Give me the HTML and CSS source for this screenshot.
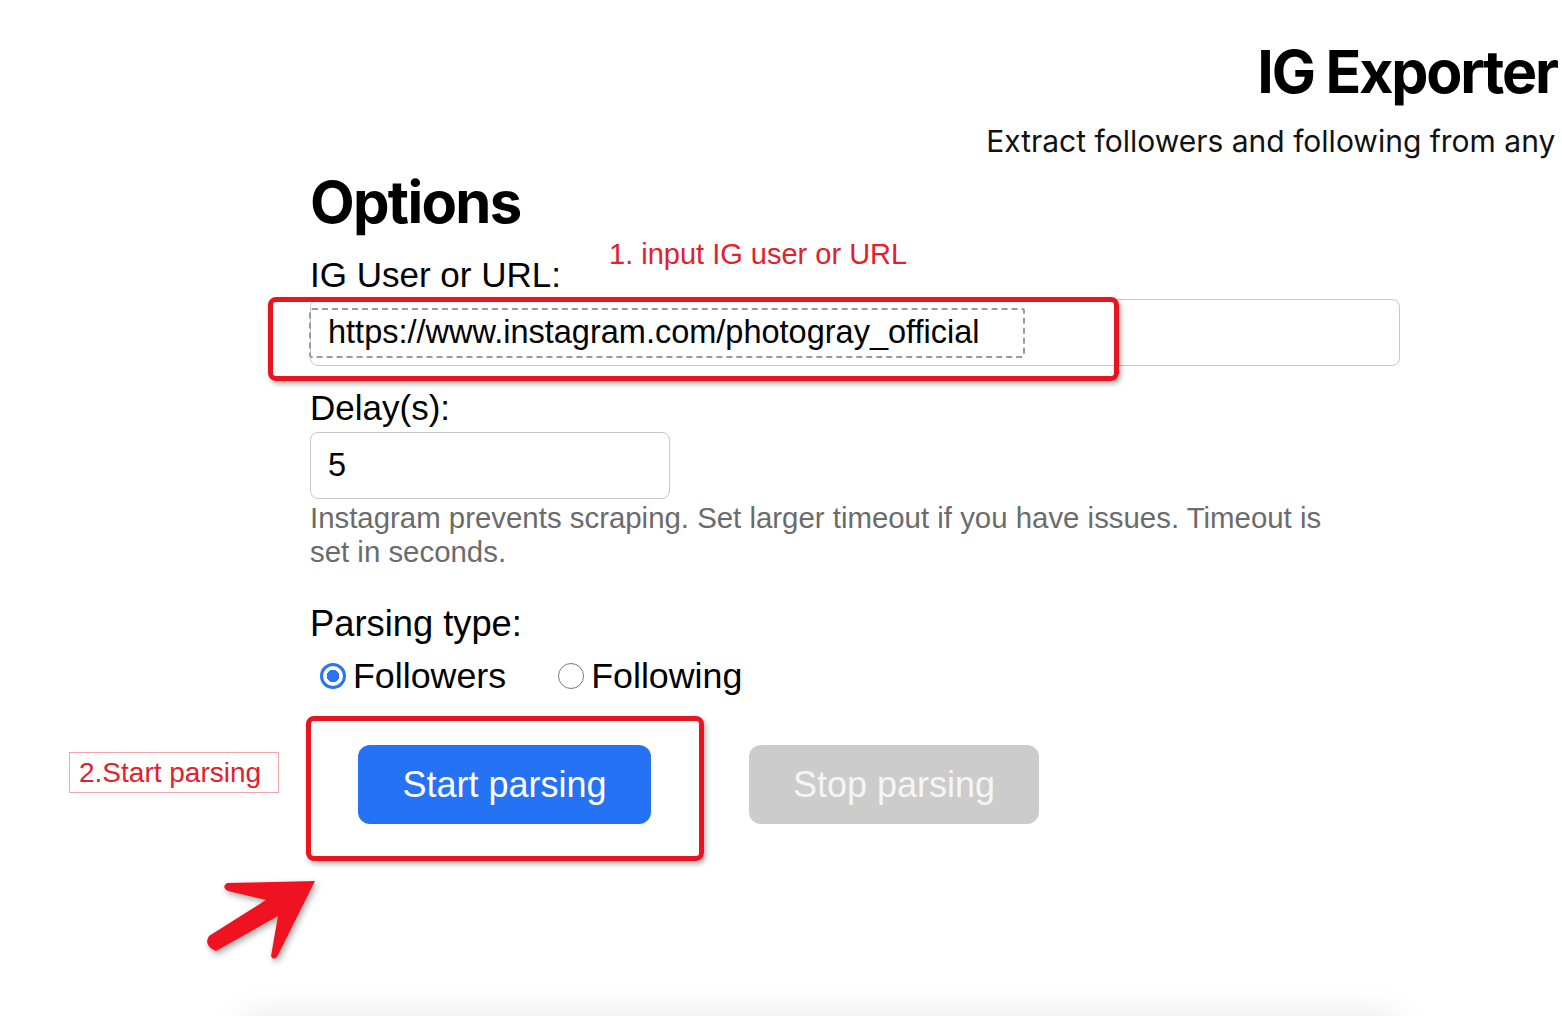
FILE: index.html
```html
<!DOCTYPE html>
<html lang="en">
<head>
<meta charset="utf-8">
<title>IG Exporter</title>
<link rel="stylesheet" href="styles.css">
</head>
<body>
<div class="page">
  <header class="header">
    <h1 class="title">IG Exporter</h1>
    <p class="subtitle">Extract followers and following from any Instagram account</p>
  </header>

  <form class="form">
    <h2 class="options-title">Options</h2>

    <label class="field-label" for="user">IG User or URL:</label>
    <input class="text-input" id="user" type="text" value="https://www.instagram.com/photogray_official">

    <label class="field-label field-gap" for="delay">Delay(s):</label>
    <input class="text-input delay-input" id="delay" type="text" value="5">
    <p class="hint">Instagram prevents scraping. Set larger timeout if you have issues. Timeout is set in seconds.</p>

    <div class="field-label parsing-label">Parsing type:</div>
    <div class="radio-row">
      <label class="radio-option"><input class="radio" type="radio" name="type" checked><span>Followers</span></label>
      <label class="radio-option"><input class="radio" type="radio" name="type"><span>Following</span></label>
    </div>

    <div class="button-row">
      <button class="btn btn-start" type="button">Start parsing</button>
      <button class="btn btn-stop" type="button" disabled>Stop parsing</button>
    </div>

    <div class="card-shadow"></div>
  </form>

  <!-- annotations -->
  <div class="note note-input">1. input IG user or URL</div>
  <div class="mark mark-input"></div>
  <div class="dashed-focus"></div>
  <div class="note-box">2.Start parsing</div>
  <div class="mark mark-button"></div>
  <svg class="arrow" width="130" height="100" viewBox="0 0 130 100">
    <path d="M115 11 L27 13 Q21 17 28 21 L66 30 L9 66 Q3 76 16 81 L78 46 L71 86 Q73 91 77 87 Z" fill="#ef1220"/>
  </svg>
</div>
</body>
</html>
```

FILE: styles.css
```css
html, body {
  margin: 0;
  padding: 0;
  background: #ffffff;
}

body {
  font-family: "Liberation Sans", Arial, sans-serif;
  color: #000;
  overflow: hidden;
}

.page {
  position: relative;
  width: 1562px;
  height: 1016px;
  overflow: hidden;
}

.header {
  width: 1000px;
  margin-left: 907px;
  padding-top: 36px;
  text-align: center;
}

.title {
  margin: 0;
  font-family: Inter, "Liberation Sans", sans-serif;
  font-weight: 700;
  font-size: 59px;
  line-height: 72px;
  letter-spacing: -2.2px;
}

.subtitle {
  margin: 15px 0 0;
  font-family: Inter, "Liberation Sans", sans-serif;
  font-size: 30px;
  line-height: 36px;
  color: #111;
}

.form {
  margin-left: 310px;
  width: 1090px;
}

.options-title {
  margin: 10px 0 0;
  font-family: Inter, "Liberation Sans", sans-serif;
  font-weight: 700;
  font-size: 58px;
  line-height: 67px;
  letter-spacing: -1.7px;
}

.field-label {
  display: block;
  margin-top: 19px;
  font-size: 35px;
  line-height: 40px;
  color: #000;
}

.field-gap {
  margin-top: 22px;
}

.text-input {
  display: block;
  box-sizing: border-box;
  width: 1090px;
  height: 67px;
  margin: 4px 0 0;
  padding: 0 17px;
  border: 1px solid #c8c8c8;
  border-radius: 8px;
  background: #fff;
  font-family: "Liberation Sans", Arial, sans-serif;
  font-size: 32.5px;
  color: #000;
  outline: none;
}

.delay-input {
  width: 360px;
}

.hint {
  max-width: 1040px;
  margin: 2px 0 0;
  font-size: 29.4px;
  line-height: 34px;
  color: #6b6b6b;
}

.parsing-label {
  margin-top: 35px;
  font-size: 36.3px;
}

.radio-row {
  display: flex;
  align-items: center;
  height: 40px;
  margin-top: 12px;
  font-size: 35.8px;
}

.radio-option {
  display: flex;
  align-items: center;
}

.radio-option + .radio-option {
  margin-left: 42px;
}

.radio {
  appearance: none;
  -webkit-appearance: none;
  box-sizing: border-box;
  width: 26px;
  height: 26px;
  margin: 0 7px 0 10px;
  border: 1.5px solid #7a7a7a;
  border-radius: 50%;
  background: #fff;
}

.radio:checked {
  border: 3.5px solid #2a74f4;
  background: radial-gradient(circle, #2a74f4 0 6px, #fff 6.5px);
}

.button-row {
  display: flex;
  margin-top: 49px;
}

.btn {
  width: 293px;
  height: 79px;
  margin: 0 49px 0 48px;
  border: none;
  border-radius: 12px;
  font-family: "Liberation Sans", Arial, sans-serif;
  font-size: 36px;
  color: #fff;
}

.btn + .btn {
  margin-left: 49px;
}

.btn-start {
  background: #2572f4;
}

.btn-stop {
  width: 290px;
  background: #cccccc;
  color: #f5f5f5;
}

.card-shadow {
  width: 1160px;
  height: 40px;
  margin: 196px 0 0 -70px;
  background: #fff;
  border-radius: 16px;
  box-shadow: 0 0 36px rgba(0, 0, 0, 0.13);
}

/* annotations drawn over the page */
.note {
  position: absolute;
  font-family: "Liberation Sans", Arial, sans-serif;
  color: #e3202b;
}

.note-input {
  left: 609px;
  top: 237px;
  font-size: 29px;
  line-height: 34px;
}

.mark {
  position: absolute;
  box-sizing: border-box;
  border: 5px solid #e8141f;
  border-radius: 8px;
  box-shadow: 2px 3px 5px rgba(0, 0, 0, 0.3);
}

.mark-input {
  left: 268px;
  top: 297px;
  width: 851px;
  height: 84px;
}

.mark-button {
  left: 306px;
  top: 716px;
  width: 398px;
  height: 145px;
}

.dashed-focus {
  position: absolute;
  left: 309px;
  top: 308px;
  width: 716px;
  height: 50px;
  box-sizing: border-box;
  border: 2px dashed #9a9a9a;
  border-radius: 3px;
}

.note-box {
  position: absolute;
  left: 69px;
  top: 752px;
  box-sizing: border-box;
  width: 210px;
  height: 41px;
  padding-left: 9px;
  border: 1px solid #f3a5ab;
  font-size: 28px;
  line-height: 39px;
  color: #e3202b;
}

.arrow {
  position: absolute;
  left: 200px;
  top: 870px;
  filter: drop-shadow(2px 3px 3px rgba(0, 0, 0, 0.35));
}
```
